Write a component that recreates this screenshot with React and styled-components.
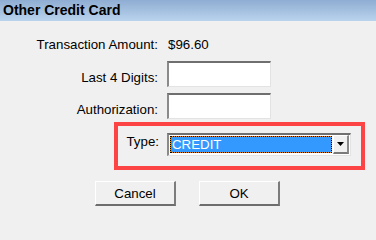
import React from 'react';
import styled, { createGlobalStyle } from 'styled-components';

const GlobalStyle = createGlobalStyle`
  html, body {
    margin: 0;
    padding: 0;
    background: #f0f0f0;
  }
  * {
    box-sizing: border-box;
  }
`;

const Dialog = styled.div`
  width: 376px;
  height: 214px;
  background: #f0f0f0;
  font-family: 'Liberation Sans', Arial, sans-serif;
  font-size: 13.3px;
  color: #000;
  overflow: hidden;
`;

const TitleBar = styled.div`
  height: 21px;
  padding: 1px 0 0 3px;
  line-height: 19px;
  font-size: 14px;
  font-weight: bold;
  background: linear-gradient(to bottom, #8fadd3, #bad3ed);
`;

const Form = styled.div`
  display: flex;
  flex-direction: column;
  padding-top: 16px;
`;

const Field = styled.div`
  display: grid;
  grid-template-columns: 158px 104px;
  column-gap: 9px;
  align-items: end;
  margin-top: ${({ $gap }) => $gap || 0}px;
`;

const Label = styled.div`
  text-align: right;
  line-height: 15px;
  white-space: nowrap;
  padding-bottom: ${({ $lift }) => $lift || 0}px;
`;

const Value = styled.div`
  line-height: 15px;
  padding-left: 1px;
`;

const TextBox = styled.input`
  width: 104px;
  height: 26px;
  margin: 0;
  padding: 0 3px;
  background: #fff;
  border-style: solid;
  border-width: 2px 1px 1px 2px;
  border-color: #6f6f6f #e3e3e3 #e3e3e3 #8a8a8a;
  font: inherit;
  outline: none;
`;

const Highlight = styled.div`
  margin: 3px 0 0 114px;
  width: 251px;
  height: 48px;
  border: 4px solid #fd4444;
  padding-top: 7px;
`;

const TypeRow = styled.div`
  display: grid;
  grid-template-columns: 41px 184px;
  column-gap: 8px;
  align-items: start;
`;

const TypeLabel = styled(Label)`
  margin-top: 1px;
`;

const Select = styled.div`
  display: flex;
  height: 23px;
  padding: 1px;
  background: #fff;
  border-style: solid;
  border-width: 2px 1px 1px 2px;
  border-color: #6f6f6f #e3e3e3 #e3e3e3 #8a8a8a;
`;

const Selected = styled.div`
  flex: 1;
  height: 17px;
  border: 1px dotted #000;
  background: linear-gradient(#3399ff, #3399ff) padding-box, #e08a1e border-box;
  color: #fff;
  line-height: 15px;
  padding-left: 1px;
`;

const Arrow = styled.div`
  width: 16px;
  height: 19px;
  margin: -1px 0 0 1px;
  display: flex;
  align-items: center;
  justify-content: center;
  background: #f0f0f0;
  border-style: solid;
  border-width: 1px 2px 2px 1px;
  border-color: #fff #8a8a8a #7a7a7a #fff;
`;

const Buttons = styled.div`
  display: flex;
  gap: 23px;
  padding-left: 95px;
  margin-top: 11px;
`;

const Button = styled.button`
  width: 81px;
  height: 25px;
  margin: 0;
  padding: 0;
  background: #f0f0f0;
  font: inherit;
  color: #000;
  border-style: solid;
  border-width: 1px 2px 2px 1px;
  border-color: #fff #7c7c7c #6d6d6d #fff;
`;

function App() {
  return (
    <Dialog>
      <GlobalStyle />
      <TitleBar>Other Credit Card</TitleBar>
      <Form>
        <Field>
          <Label>Transaction Amount:</Label>
          <Value>$96.60</Value>
        </Field>
        <Field $gap={9}>
          <Label $lift={2}>Last 4 Digits:</Label>
          <TextBox />
        </Field>
        <Field $gap={6}>
          <Label $lift={2}>Authorization:</Label>
          <TextBox />
        </Field>
        <Highlight>
          <TypeRow>
            <TypeLabel>Type:</TypeLabel>
            <Select>
              <Selected>CREDIT</Selected>
              <Arrow>
                <svg width="7" height="4" viewBox="0 0 7 4">
                  <path d="M0 0h7L3.5 4z" fill="#000" />
                </svg>
              </Arrow>
            </Select>
          </TypeRow>
        </Highlight>
        <Buttons>
          <Button>Cancel</Button>
          <Button>OK</Button>
        </Buttons>
      </Form>
    </Dialog>
  );
}

export default App;
